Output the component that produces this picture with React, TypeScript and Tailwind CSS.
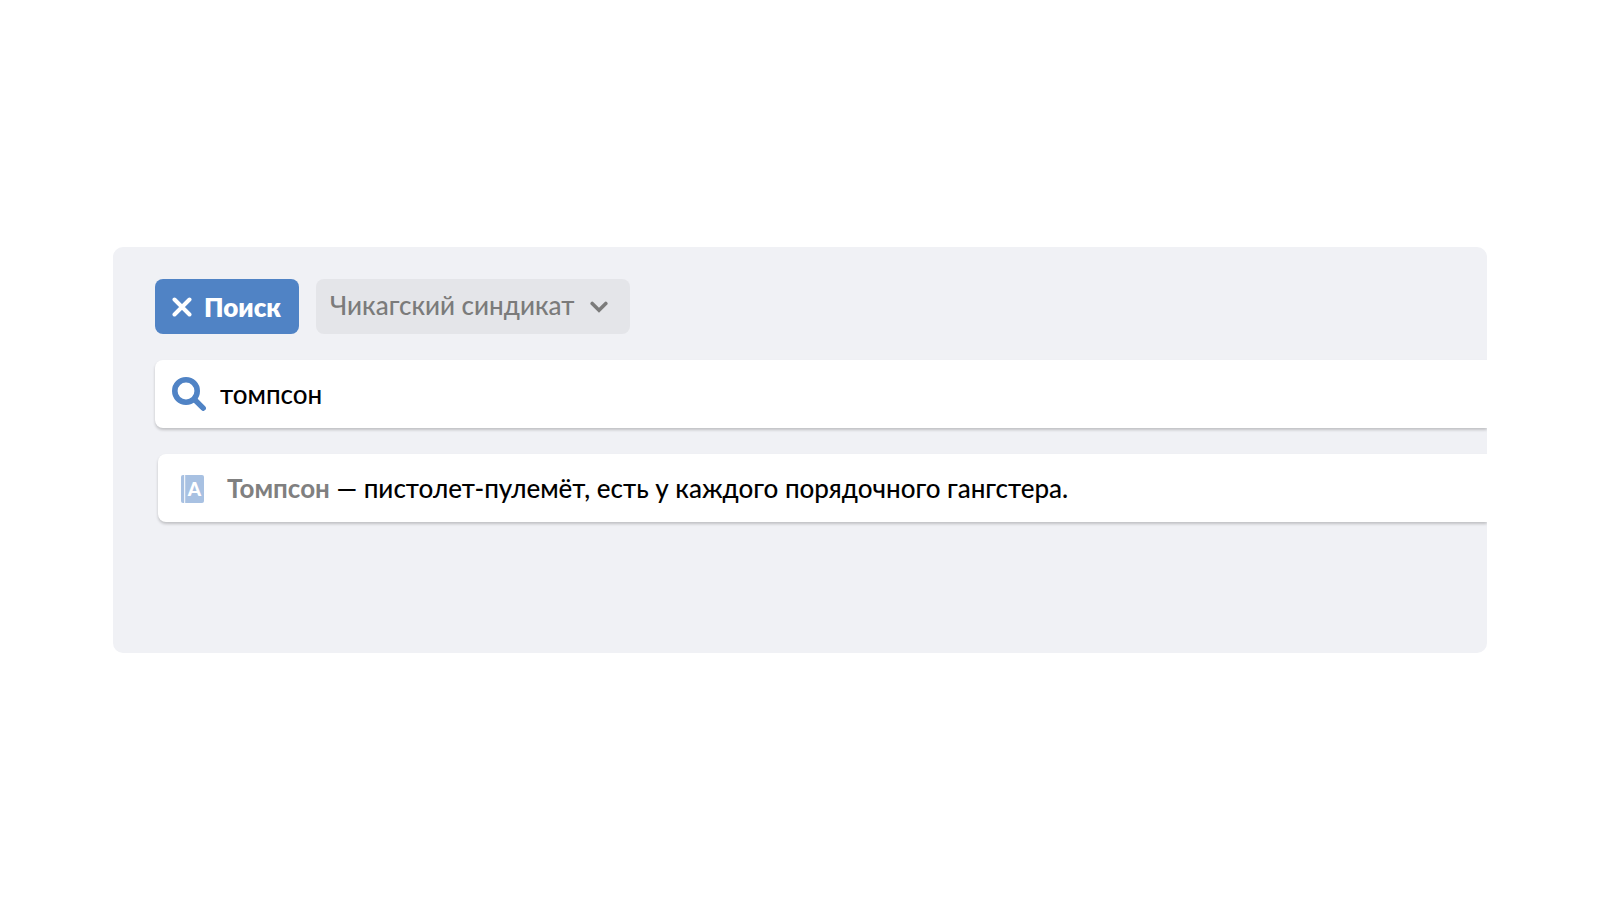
import { useState } from "react";

interface entry {
  id: number;
  term: string;
  text: string;
}

const entries: entry[] = [
  { id: 1, term: "Томпсон", text: "пистолет-пулемёт, есть у каждого порядочного гангстера." },
];

const CloseIcon = () => (
  <svg className="w-5 h-5 shrink-0" viewBox="0 0 20 20" fill="none" stroke="currentColor" strokeWidth="4" strokeLinecap="round" aria-hidden="true">
    <path d="M2.5 2.5 17.5 17.5M17.5 2.5 2.5 17.5" />
  </svg>
);

const ChevronIcon = () => (
  <svg className="w-[18px] h-3" viewBox="0 0 18 12" fill="none" stroke="currentColor" strokeWidth="3.6" strokeLinecap="round" aria-hidden="true">
    <path d="M2.2 2.5 9 9.2 15.8 2.5" />
  </svg>
);

const SearchIcon = () => (
  <svg className="w-[34px] h-[34px] shrink-0" viewBox="0 0 34 34" fill="none" stroke="currentColor" aria-hidden="true">
    <circle cx="14" cy="14" r="11.2" strokeWidth="5.6" />
    <path d="M23 23 31.2 31.2" strokeWidth="5.4" strokeLinecap="round" />
  </svg>
);

const BookIcon = () => (
  <svg className="w-[23px] h-[30px] shrink-0" viewBox="0 0 23 30" aria-hidden="true">
    <path fill="#a8c1e2" d="M2 2H3.2V30H2A2 2 0 0 1 0 28V4A2 2 0 0 1 2 2Z" />
    <path fill="#a8c1e2" d="M4.2 2H21A2 2 0 0 1 23 4V28A2 2 0 0 1 21 30H4.2Z" />
    <text x="13.4" y="22.8" textAnchor="middle" className="fill-white text-[19px] font-black">A</text>
  </svg>
);

export default function App() {
  const [query, setQuery] = useState("томпсон");
  const [set, setSet] = useState("chicago");

  return (
    <main className="min-h-screen flex items-center bg-white px-[113px] font-['Lato','Noto_Sans',sans-serif] text-[26px] leading-8 text-black">
      <section className="w-full min-h-[406px] overflow-hidden rounded-[10px] bg-[#f0f1f5] pt-8 pb-32 pl-[42px]">
        <div className="flex gap-[17px]">
          <button
            type="button"
            onClick={() => setQuery("")}
            className="flex items-center gap-3 h-[55px] min-w-36 px-[17px] rounded-lg bg-[#5083c5] text-white font-extrabold"
          >
            <CloseIcon />
            <span>Поиск</span>
          </button>
          <div className="relative text-[#7b7b7b]">
            <select
              aria-label="Набор"
              value={set}
              onChange={(e) => setSet(e.target.value)}
              className="appearance-none w-[314px] h-[55px] pl-[14px] pr-12 pb-1 rounded-lg bg-[#e4e5e9] font-medium"
            >
              <option value="chicago">Чикагский синдикат</option>
            </select>
            <div className="absolute right-[22px] inset-y-0 flex items-center pointer-events-none">
              <ChevronIcon />
            </div>
          </div>
        </div>

        <label className="mt-[26px] flex items-center gap-[14px] h-[68px] pl-[17px] rounded-l-lg bg-white text-[#5083c5] shadow-[0_2px_3px_rgba(0,0,0,0.2)]">
          <SearchIcon />
          <input
            type="text"
            aria-label="Поиск"
            value={query}
            onChange={(e) => setQuery(e.target.value)}
            className="flex-1 min-w-0 h-12 outline-none text-black font-medium"
          />
        </label>

        <ul className="mt-[26px] ml-[3px] flex flex-col gap-4">
          {entries.map((item) => (
            <li
              key={item.id}
              className="flex items-center gap-[23px] min-h-[68px] pl-[23px] rounded-l-lg bg-white shadow-[0_2px_3px_rgba(0,0,0,0.2)]"
            >
              <BookIcon />
              <p className="font-medium">
                <b className="font-bold text-[#808080]">{item.term}</b> — {item.text}
              </p>
            </li>
          ))}
        </ul>
      </section>
    </main>
  );
}
